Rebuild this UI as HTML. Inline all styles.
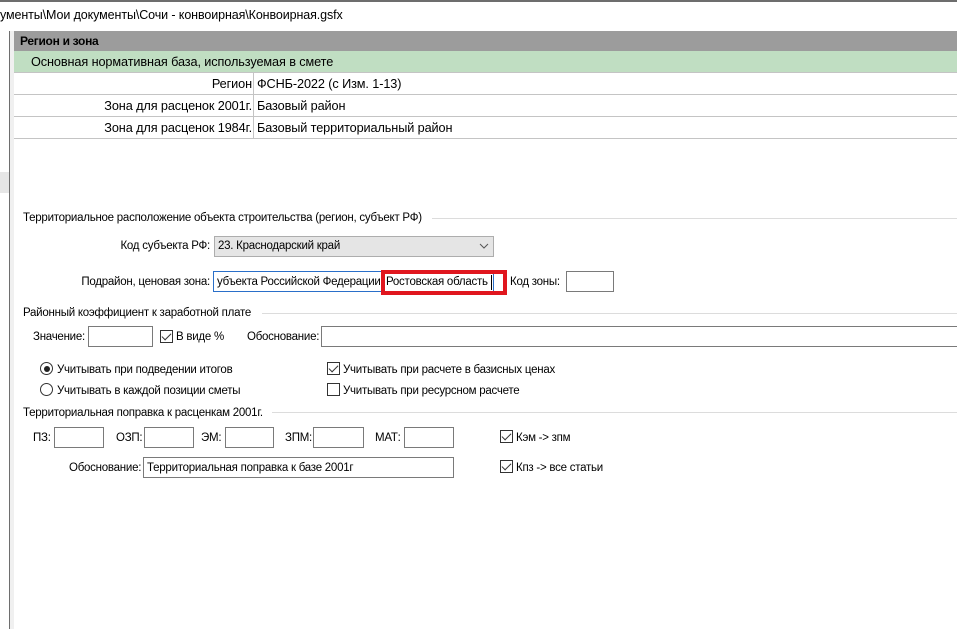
<!DOCTYPE html>
<html><head><meta charset="utf-8"><style>
*{margin:0;padding:0;box-sizing:border-box}
body{width:957px;height:629px;background:#fff;position:relative;overflow:hidden;font-family:"Liberation Sans","DejaVu Sans",sans-serif;color:#000}
.a{position:absolute;white-space:nowrap}
.f{font-size:11.5px;letter-spacing:-0.25px}
.t{font-size:12.7px;letter-spacing:-0.1px}
.in{position:absolute;border:1px solid #7a7a7a;background:#fff;height:21px}
.cb{position:absolute;width:13px;height:13px;border:1px solid #333;background:#fff}
.cb.c::after{content:"";position:absolute;left:3px;top:0px;width:4px;height:8px;border:solid #333;border-width:0 1.3px 1.3px 0;transform:rotate(45deg)}
.rb{position:absolute;width:13px;height:13px;border:1px solid #333;border-radius:50%;background:#fff}
.rb.c::after{content:"";position:absolute;left:2.5px;top:2.5px;width:6px;height:6px;border-radius:50%;background:#222}
.hl{position:absolute;height:1px;background:#dcdcdc}
</style></head><body>
<div class="a" style="left:0;top:0;width:957px;height:2px;background:#6d6d6d"></div>
<div class="a" style="left:0;top:8px;font-size:12.5px;letter-spacing:-0.1px">ументы\Мои документы\Сочи - конвоирная\Конвоирная.gsfx</div>
<div class="a" style="left:9px;top:31px;width:1px;height:598px;background:#6e6e6e"></div>
<div class="a" style="left:10px;top:31px;width:4px;height:598px;background:#f0f0f0"></div>
<div class="a" style="left:0;top:172px;width:9px;height:21px;background:#e6e6e6"></div>

<div class="a" style="left:14px;top:31px;width:943px;height:20px;background:#9c9c9c"></div>
<div class="a" style="left:20px;top:34px;font-size:12px;font-weight:bold;letter-spacing:-0.3px">Регион и зона</div>
<div class="a" style="left:14px;top:51px;width:943px;height:21px;background:#c0dec2"></div>
<div class="a t" style="left:31px;top:55px">Основная нормативная база, используемая в смете</div>
<div class="a" style="left:14px;top:72px;width:943px;height:1px;background:#c4c4c4"></div>
<div class="a" style="left:14px;top:94px;width:943px;height:1px;background:#c4c4c4"></div>
<div class="a" style="left:14px;top:116px;width:943px;height:1px;background:#c4c4c4"></div>
<div class="a" style="left:14px;top:138px;width:943px;height:1px;background:#c4c4c4"></div>
<div class="a" style="left:253px;top:73px;width:1px;height:65px;background:#c4c4c4"></div>
<div class="a t" style="right:705px;top:77px">Регион</div>
<div class="a t" style="left:257px;top:77px">ФСНБ-2022 (с Изм. 1-13)</div>
<div class="a t" style="right:705px;top:99px">Зона для расценок 2001г.</div>
<div class="a t" style="left:257px;top:99px">Базовый район</div>
<div class="a t" style="right:705px;top:121px">Зона для расценок 1984г.</div>
<div class="a t" style="left:257px;top:121px">Базовый территориальный район</div>

<div class="a f" style="left:23px;top:212px">Территориальное расположение объекта строительства (регион, субъект РФ)</div>
<div class="hl" style="left:432px;top:218px;width:525px"></div>
<div class="a f" style="right:747px;top:240px">Код субъекта РФ:</div>
<div class="in" style="left:214px;top:236px;width:280px;background:#e5e5e5;border-color:#adadad"></div>
<div class="a f" style="left:218px;top:240px">23. Краснодарский край</div>
<svg class="a" style="left:479px;top:243px" width="10" height="7"><path d="M1 1L5 5L9 1" fill="none" stroke="#555" stroke-width="1"/></svg>

<div class="a f" style="right:747px;top:276px">Подрайон, ценовая зона:</div>
<div class="in" style="left:213px;top:271px;width:281px;border-color:#2a6fc9"></div>
<div class="a f" style="left:217px;top:276px;width:163px;overflow:hidden">убъекта Российской Федерации</div>
<div class="a f" style="left:386px;top:276px">Ростовская область</div>
<div class="a" style="left:491px;top:275px;width:1px;height:15px;background:#000"></div>
<div class="a" style="left:381px;top:270px;width:126px;height:25px;border:4px solid #e0161e"></div>
<div class="a f" style="left:510px;top:276px">Код зоны:</div>
<div class="in" style="left:566px;top:271px;width:48px"></div>

<div class="a f" style="left:23px;top:307px">Районный коэффициент к заработной плате</div>
<div class="hl" style="left:262px;top:313px;width:695px"></div>
<div class="a f" style="left:33px;top:331px">Значение:</div>
<div class="in" style="left:88px;top:326px;width:65px"></div>
<div class="cb c" style="left:160px;top:330px"></div>
<div class="a f" style="left:176px;top:331px">В виде %</div>
<div class="a f" style="left:247px;top:331px">Обоснование:</div>
<div class="in" style="left:321px;top:326px;width:640px"></div>

<div class="rb c" style="left:40px;top:362px"></div>
<div class="a f" style="left:57px;top:364px">Учитывать при подведении итогов</div>
<div class="rb" style="left:40px;top:383px"></div>
<div class="a f" style="left:57px;top:385px">Учитывать в каждой позиции сметы</div>
<div class="cb c" style="left:327px;top:362px"></div>
<div class="a f" style="left:343px;top:364px">Учитывать при расчете в базисных ценах</div>
<div class="cb" style="left:327px;top:383px"></div>
<div class="a f" style="left:343px;top:385px">Учитывать при ресурсном расчете</div>

<div class="a f" style="left:23px;top:407px">Территориальная поправка к расценкам 2001г.</div>
<div class="hl" style="left:272px;top:412px;width:685px"></div>
<div class="a f" style="left:33px;top:432px">ПЗ:</div>
<div class="in" style="left:54px;top:427px;width:50px"></div>
<div class="a f" style="left:116px;top:432px">ОЗП:</div>
<div class="in" style="left:144px;top:427px;width:50px"></div>
<div class="a f" style="left:201px;top:432px">ЭМ:</div>
<div class="in" style="left:225px;top:427px;width:49px"></div>
<div class="a f" style="left:285px;top:432px">ЗПМ:</div>
<div class="in" style="left:313px;top:427px;width:51px"></div>
<div class="a f" style="left:375px;top:432px">МАТ:</div>
<div class="in" style="left:404px;top:427px;width:50px"></div>
<div class="cb c" style="left:500px;top:430px"></div>
<div class="a f" style="left:516px;top:432px">Кэм -&gt; зпм</div>
<div class="a f" style="left:69px;top:462px">Обоснование:</div>
<div class="in" style="left:143px;top:457px;width:311px"></div>
<div class="a f" style="left:147px;top:462px">Территориальная поправка к базе 2001г</div>
<div class="cb c" style="left:500px;top:460px"></div>
<div class="a f" style="left:516px;top:462px">Кпз -&gt; все статьи</div>
</body></html>
